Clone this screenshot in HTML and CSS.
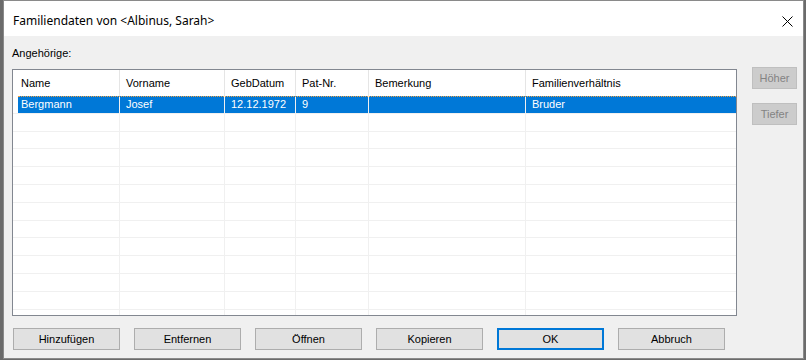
FILE: index.html
```html
<!DOCTYPE html>
<html lang="de">

<head>
  <meta charset="UTF-8">
  <meta name="viewport" content="width=device-width, initial-scale=1.0">
  <title>Familiendaten</title>
  <link rel="stylesheet" href="styles.css">
</head>

<body>
  <div class="window">
    <div class="titlebar">
      <span class="title">Familiendaten von &lt;Albinus, Sarah&gt;</span>
      <span class="close">
        <svg width="11" height="11" viewBox="0 0 11 11">
          <path d="M0.5 0.5 L10.5 10.5 M10.5 0.5 L0.5 10.5" stroke="#000" stroke-width="1" fill="none" />
        </svg>
      </span>
    </div>

    <div class="content">
      <div class="label">Angehörige:</div>

      <div class="main">
        <!-- Liste der Angehörigen -->
        <div class="list">
          <div class="row head">
            <div class="cell">Name</div>
            <div class="cell">Vorname</div>
            <div class="cell">GebDatum</div>
            <div class="cell">Pat-Nr.</div>
            <div class="cell">Bemerkung</div>
            <div class="cell">Familienverhältnis</div>
          </div>
          <div class="rows">
            <div class="row sel">
              <div class="cell">Bergmann</div>
              <div class="cell">Josef</div>
              <div class="cell">12.12.1972</div>
              <div class="cell">9</div>
              <div class="cell"></div>
              <div class="cell">Bruder</div>
            </div>
            <div class="row"><div class="cell"></div><div class="cell"></div><div class="cell"></div><div class="cell"></div><div class="cell"></div><div class="cell"></div></div>
            <div class="row"><div class="cell"></div><div class="cell"></div><div class="cell"></div><div class="cell"></div><div class="cell"></div><div class="cell"></div></div>
            <div class="row"><div class="cell"></div><div class="cell"></div><div class="cell"></div><div class="cell"></div><div class="cell"></div><div class="cell"></div></div>
            <div class="row"><div class="cell"></div><div class="cell"></div><div class="cell"></div><div class="cell"></div><div class="cell"></div><div class="cell"></div></div>
            <div class="row"><div class="cell"></div><div class="cell"></div><div class="cell"></div><div class="cell"></div><div class="cell"></div><div class="cell"></div></div>
            <div class="row"><div class="cell"></div><div class="cell"></div><div class="cell"></div><div class="cell"></div><div class="cell"></div><div class="cell"></div></div>
            <div class="row"><div class="cell"></div><div class="cell"></div><div class="cell"></div><div class="cell"></div><div class="cell"></div><div class="cell"></div></div>
            <div class="row"><div class="cell"></div><div class="cell"></div><div class="cell"></div><div class="cell"></div><div class="cell"></div><div class="cell"></div></div>
            <div class="row"><div class="cell"></div><div class="cell"></div><div class="cell"></div><div class="cell"></div><div class="cell"></div><div class="cell"></div></div>
            <div class="row"><div class="cell"></div><div class="cell"></div><div class="cell"></div><div class="cell"></div><div class="cell"></div><div class="cell"></div></div>
            <div class="row"><div class="cell"></div><div class="cell"></div><div class="cell"></div><div class="cell"></div><div class="cell"></div><div class="cell"></div></div>
            <div class="row"><div class="cell"></div><div class="cell"></div><div class="cell"></div><div class="cell"></div><div class="cell"></div><div class="cell"></div></div>
          </div>
        </div>

        <div class="side">
          <button class="btn small" disabled>Höher</button>
          <button class="btn small" disabled>Tiefer</button>
        </div>
      </div>

      <div class="footer">
        <button class="btn">Hinzufügen</button>
        <button class="btn">Entfernen</button>
        <button class="btn">Öffnen</button>
        <button class="btn">Kopieren</button>
        <button class="btn default">OK</button>
        <button class="btn">Abbruch</button>
      </div>
    </div>
  </div>
</body>

</html>
```

FILE: styles.css
```css
* {
  padding: 0;
  margin: 0;
  box-sizing: border-box;
}

body {
  background-color: #6b6b6b;
  font-family: "Liberation Sans", Arial, sans-serif;
  font-size: 11px;
  color: #000;
}

.window {
  width: 801px;
  height: 359px;
  margin-left: 3px;
  border: 1px solid #8a8a8a;
  background-color: #f0f0f0;
}

/* Titelleiste */
.titlebar {
  height: 35px;
  padding: 5px 10px 0 9px;
  background-color: #fff;
  display: flex;
  align-items: center;
  justify-content: space-between;
}

.title {
  font-family: "Noto Sans", "Open Sans", sans-serif;
  font-size: 12px;
  line-height: 16px;
}

.close {
  display: flex;
  width: 11px;
  height: 11px;
}

.content {
  padding: 11px 6px 0 8px;
}

.label {
  line-height: 13px;
  margin-bottom: 7px;
}

.main {
  display: flex;
  align-items: flex-start;
}

/* ListView */
.list {
  width: 725px;
  height: 247px;
  margin-top: 2px;
  border: 1px solid #828790;
  background-color: #fff;
  overflow: hidden;
}

.row {
  display: grid;
  grid-template-columns: 107px 105px 71px 73px 157px 1fr;
  height: 17.8px;
  line-height: 13px;
  border-bottom: 1px solid #f0f0f0;
  position: relative;
}

.row .cell {
  padding-left: 6px;
  border-right: 1px solid #f0f0f0;
  display: flex;
  align-items: center;
  white-space: nowrap;
}

.row .cell:first-child {
  padding-left: 8px;
}

.row .cell:last-child {
  border-right: none;
}

.row.head {
  height: 26px;
  border-bottom: none;
}

.row.head .cell {
  border-right-color: #e5e5e5;
}

.row.sel .cell {
  background-color: #0078d7;
  color: #fff;
}

.row.sel .cell:first-child {
  background: linear-gradient(to right, #fff 5px, #0078d7 5px);
}

/* Fokusrahmen */
.row.sel::before {
  content: "";
  position: absolute;
  left: 5px;
  right: 0;
  top: 0;
  border-top: 1px dotted #f0a040;
}

.rows {
  height: 219px;
  overflow: hidden;
}

/* Buttons */
.btn {
  width: 107px;
  height: 22px;
  font-family: "Liberation Sans", Arial, sans-serif;
  font-size: 11px;
  color: #000;
  background-color: #e1e1e1;
  border: 1px solid #adadad;
}

.btn.default {
  border: 2px solid #0078d7;
}

.btn:disabled {
  background-color: #cccccc;
  border-color: #bfbfbf;
  color: #838383;
}

.side {
  display: flex;
  flex-direction: column;
  gap: 14px;
  margin-left: 15px;
}

.btn.small {
  width: 45px;
}

.footer {
  display: flex;
  gap: 14px;
  padding-left: 1px;
  margin-top: 12px;
}
```
